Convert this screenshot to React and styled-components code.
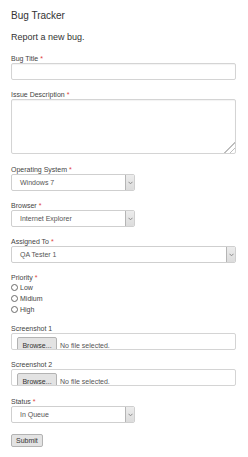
import React from 'react';
import styled, { createGlobalStyle } from 'styled-components';

const GlobalStyle = createGlobalStyle`
  html, body {
    margin: 0;
    padding: 0;
    background: #fff;
  }
  body {
    font-family: "Liberation Sans", Arial, sans-serif;
    color: #333;
  }
  * {
    box-sizing: border-box;
  }
`;

const Page = styled.div`
  padding: 10px 12px 0 11px;
`;

const Title = styled.h1`
  margin: 0 0 10px;
  font-size: 10px;
  line-height: 12px;
  font-weight: normal;
  color: #333;
`;

const Intro = styled.p`
  margin: 0 0 11px;
  font-size: 9px;
  line-height: 11px;
  color: #333;
`;

const Field = styled.div`
  margin-bottom: ${(p) => p.$gap ?? 10}px;
`;

const Label = styled.label`
  display: block;
  font-size: 7px;
  line-height: 9px;
  color: #444;
`;

const Req = styled.span`
  color: #e0403c;
`;

const TextInput = styled.input`
  display: block;
  width: 100%;
  height: 17px;
  margin: 0;
  border: 1px solid #d4d4d4;
  border-radius: 2px;
  box-shadow: inset 0 1px 1px rgba(0, 0, 0, 0.05);
  font: 7px "Liberation Sans", Arial, sans-serif;
  outline: none;
`;

const TextArea = styled.textarea`
  display: block;
  width: 100%;
  height: 55px;
  margin: 0;
  border: 1px solid #d4d4d4;
  border-radius: 2px;
  box-shadow: inset 0 1px 1px rgba(0, 0, 0, 0.05);
  font: 7px "Liberation Sans", Arial, sans-serif;
  resize: vertical;
  outline: none;

  &::-webkit-resizer {
    background: linear-gradient(
      135deg,
      transparent 62%,
      #bdbdbd 62%,
      #bdbdbd 68%,
      transparent 68%,
      transparent 80%,
      #bdbdbd 80%,
      #bdbdbd 86%,
      transparent 86%
    );
  }
`;

const SelectBox = styled.div`
  display: flex;
  width: ${(p) => (p.$wide ? '100%' : '124px')};
  height: 17px;
  border: 1px solid #cfcfcf;
  border-radius: 2px;
  background: #fff;
  overflow: hidden;
`;

const SelectValue = styled.span`
  flex: 1;
  padding: 1px 0 0 8px;
  font-size: 7px;
  line-height: 14px;
  color: #555;
`;

const SelectArrow = styled.span`
  display: flex;
  align-items: center;
  justify-content: center;
  width: 9px;
  border-left: 1px solid #b5b5b5;
  background: linear-gradient(#ececec, #dcdcdc);
`;

const RadioList = styled.div`
  display: flex;
  flex-direction: column;
`;

const RadioRow = styled.label`
  display: flex;
  align-items: center;
  gap: 2px;
  height: 11px;
  font-size: 7px;
  color: #444;
`;

const RadioDot = styled.span`
  width: 7px;
  height: 7px;
  border: 1px solid #6a6a6a;
  border-radius: 50%;
  background: #fff;
`;

const FileBox = styled.div`
  display: flex;
  align-items: flex-start;
  height: 17px;
  padding: 3px 0 0 5px;
  border: 1px solid #d4d4d4;
  border-radius: 2px;
  overflow: hidden;
`;

const BrowseButton = styled.span`
  flex: none;
  width: 40px;
  height: 16px;
  padding-top: 3px;
  border: 1px solid #b3b3b3;
  border-radius: 2px;
  background: #e3e3e3;
  font-size: 7px;
  line-height: 9px;
  text-align: center;
  color: #333;
`;

const FileName = styled.span`
  margin-left: 3px;
  padding-top: 4px;
  font-size: 7px;
  line-height: 9px;
  color: #555;
`;

const SubmitButton = styled.button`
  display: block;
  height: 13px;
  margin: 11px 0 0;
  padding: 0 4px;
  border: 1px solid #b3b3b3;
  border-radius: 2px;
  background: #e3e3e3;
  font: 7px/11px "Liberation Sans", Arial, sans-serif;
  color: #333;
`;

function Chevron() {
  return (
    <svg width="5" height="4" viewBox="0 0 5 4">
      <path d="M0.5 0.8 L2.5 2.8 L4.5 0.8" fill="none" stroke="#8a8a8a" strokeWidth="1" />
    </svg>
  );
}

function Select({ value, wide }) {
  return (
    <SelectBox $wide={wide}>
      <SelectValue>{value}</SelectValue>
      <SelectArrow>
        <Chevron />
      </SelectArrow>
    </SelectBox>
  );
}

function FileInput() {
  return (
    <FileBox>
      <BrowseButton>Browse...</BrowseButton>
      <FileName>No file selected.</FileName>
    </FileBox>
  );
}

function FieldLabel({ children, required }) {
  return (
    <Label>
      {children}
      {required && <Req> *</Req>}
    </Label>
  );
}

export default function App() {
  return (
    <>
      <GlobalStyle />
      <Page>
        <Title>Bug Tracker</Title>
        <Intro>Report a new bug.</Intro>

        <Field>
          <FieldLabel required>Bug Title</FieldLabel>
          <TextInput type="text" />
        </Field>

        <Field $gap={11}>
          <FieldLabel required>Issue Description</FieldLabel>
          <TextArea />
        </Field>

        <Field>
          <FieldLabel required>Operating System</FieldLabel>
          <Select value="Windows 7" />
        </Field>

        <Field>
          <FieldLabel required>Browser</FieldLabel>
          <Select value="Internet Explorer" />
        </Field>

        <Field>
          <FieldLabel required>Assigned To</FieldLabel>
          <Select value="QA Tester 1" wide />
        </Field>

        <Field $gap={9}>
          <FieldLabel required>Priority</FieldLabel>
          <RadioList>
            {['Low', 'Midium', 'High'].map((p) => (
              <RadioRow key={p}>
                <RadioDot />
                {p}
              </RadioRow>
            ))}
          </RadioList>
        </Field>

        <Field>
          <FieldLabel>Screenshot 1</FieldLabel>
          <FileInput />
        </Field>

        <Field $gap={11}>
          <FieldLabel>Screenshot 2</FieldLabel>
          <FileInput />
        </Field>

        <Field $gap={0}>
          <FieldLabel required>Status</FieldLabel>
          <Select value="In Queue" />
        </Field>

        <SubmitButton type="button">Submit</SubmitButton>
      </Page>
    </>
  );
}
